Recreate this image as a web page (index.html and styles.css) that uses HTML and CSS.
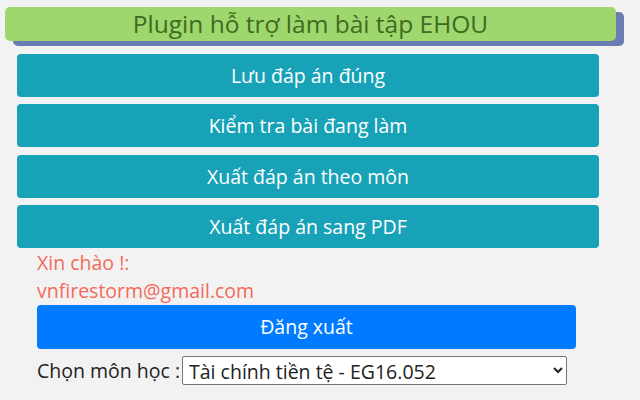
FILE: index.html
```html
<!DOCTYPE html>
<html>
<head>
    <meta charset="utf-8">
    <title>Plugin EHOU</title>
    <link rel="stylesheet" href="styles.css">
</head>
<body>
<div id="popup">
    <div id="title">Plugin hỗ trợ làm bài tập EHOU</div>

    <div id="actions">
        <button class="btn-info">Lưu đáp án đúng</button>
        <button class="btn-info">Kiểm tra bài đang làm</button>
        <button class="btn-info">Xuất đáp án theo môn</button>
        <button class="btn-info">Xuất đáp án sang PDF</button>
    </div>

    <div id="account">
        <div class="greet">Xin chào !:</div>
        <div class="greet">vnfirestorm@gmail.com</div>
        <button id="btnLogout">Đăng xuất</button>
        <div id="subject">
            <label for="monHoc">Chọn môn học :</label>
            <select id="monHoc">
                <option>Tài chính tiền tệ - EG16.052</option>
            </select>
        </div>
    </div>
</div>
</body>
</html>
```
FILE: styles.css
```css
body {
    margin: 0;
    padding: 0;
    background-color: #f2f2f2;
    font-family: "Open Sans", "Noto Sans", sans-serif;
}

#popup {
    width: 640px;
    padding-top: 7px;
}

/* Tiêu đề */
#title {
    width: 611px;
    height: 34px;
    margin-left: 5px;
    background-color: #9dd76d;
    color: #3f6b20;
    border-radius: 5px;
    box-shadow: 8px 5px 0 #6a7cb0;
    font-size: 24.5px;
    line-height: 34px;
    text-align: center;
}

/* Các nút chức năng */
#actions {
    display: flex;
    flex-direction: column;
    gap: 7.33px;
    width: 582px;
    margin: 13px 0 0 17px;
}

.btn-info {
    height: 43px;
    padding: 0;
    border: none;
    border-radius: 4px;
    background-color: #17a2b8;
    color: #fff;
    font-family: inherit;
    font-size: 19.5px;
    cursor: pointer;
}

#account {
    padding-left: 37px;
    padding-top: 1px;
}

.greet {
    color: #f26a5a;
    font-size: 19.5px;
    line-height: 28px;
}

#btnLogout {
    display: block;
    width: 539px;
    height: 44px;
    padding: 0;
    border: none;
    border-radius: 4px;
    background-color: #007bff;
    color: #fff;
    font-family: inherit;
    font-size: 19.5px;
}

#subject {
    display: flex;
    align-items: center;
    margin-top: 7px;
    font-size: 19.5px;
    color: #222;
}

#subject select {
    width: 385px;
    height: 29px;
    margin-left: 2px;
    padding: 0 2px;
    border: 1px solid #767676;
    border-radius: 2px;
    background-color: #fff;
    font-family: inherit;
    font-size: 19.5px;
    color: #222;
}
```
